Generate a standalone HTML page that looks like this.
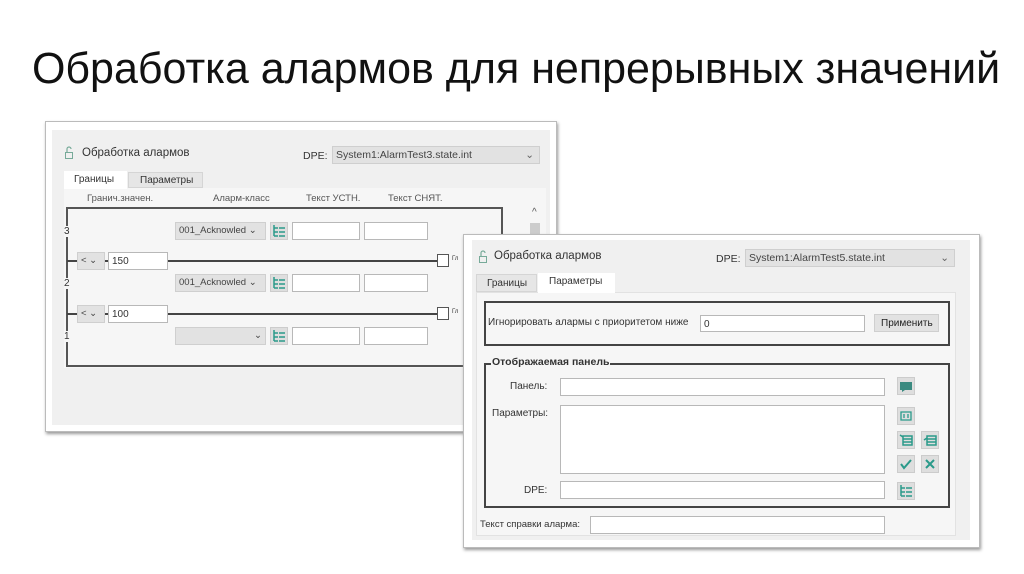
<!DOCTYPE html>
<html><head><meta charset="utf-8"><style>
*{box-sizing:border-box;margin:0;padding:0}
body{width:1024px;height:574px;background:#fff;position:relative;overflow:hidden;font-family:"Liberation Sans",sans-serif;color:#222}
.a{position:absolute}
.t{font-size:10px;color:#333;white-space:nowrap}
.in{position:absolute;background:#fff;border:1px solid #b8b8b8}
.cb{position:absolute;background:#e2e2e2;border:1px solid #cfcfcf;font-size:9.5px;color:#444;padding:2px 3px;white-space:nowrap}
.ic{position:absolute;width:18px;height:18px;background:#dedede;border:1px solid #ccc}
.ic svg{width:16px;height:16px}
.line{position:absolute;background:#444;height:2px}
</style></head><body>
<div class="a" style="left:32px;top:44px;font-size:44px;color:#111;white-space:nowrap;transform:scaleX(0.977);transform-origin:left top">Обработка алармов для непрерывных значений</div>

<!-- panel 1 -->
<div class="a" style="left:45px;top:121px;width:512px;height:311px;border:1px solid #bbb;background:#fff;box-shadow:1px 2px 3px #999"></div>
<div class="a" style="left:52px;top:130px;width:498px;height:295px;background:#f0f0f0"></div>
<svg class="a" style="left:64px;top:146px" width="10" height="14"><path d="M3 6V3a2 2 0 0 1 4 0" fill="none" stroke="#7a9" stroke-width="1.2"/><rect x="1.5" y="6.5" width="7" height="6" fill="none" stroke="#7a9"/></svg>
<div class="a t" style="left:82px;top:147px;font-size:11.5px">Обработка алармов</div>
<div class="a t" style="left:303px;top:150px;font-size:10.5px">DPE:</div>
<div class="cb" style="left:332px;top:146px;width:208px;height:18px;font-size:10.5px">System1:AlarmTest3.state.int<span style="position:absolute;right:5px;color:#666">⌄</span></div>
<div class="a" style="left:64px;top:188px;width:482px;height:180px;background:#f6f6f6"></div>
<div class="a t" style="left:64px;top:171px;width:63px;height:18px;background:#fff;padding:3px 0 0 10px">Границы</div>
<div class="a t" style="left:128px;top:172px;width:75px;height:16px;background:#e6e6e6;border:1px solid #d5d5d5;padding:2px 0 0 11px">Параметры</div>
<div class="a t" style="left:87px;top:193px;font-size:9.5px;color:#555">Гранич.значен.</div>
<div class="a t" style="left:213px;top:193px;font-size:9.5px;color:#555">Аларм-класс</div>
<div class="a t" style="left:306px;top:193px;font-size:9.5px;color:#555">Текст УСТН.</div>
<div class="a t" style="left:388px;top:193px;font-size:9.5px;color:#555">Текст СНЯТ.</div>
<div class="a" style="left:66px;top:207px;width:437px;height:160px;border:2px solid #555;border-right:none"></div>
<div class="a" style="left:501px;top:207px;width:2px;height:30px;background:#555"></div>
<div class="a t" style="left:532px;top:207px;color:#555">^</div>
<div class="a" style="left:530px;top:223px;width:10px;height:14px;background:#ccc"></div>
<!-- rows -->
<div class="a t" style="left:64px;top:226px;background:#f6f6f6">3</div>
<div class="a t" style="left:64px;top:278px;background:#f6f6f6">2</div>
<div class="a t" style="left:64px;top:331px;background:#f6f6f6">1</div>
<div class="cb" style="left:175px;top:222px;width:91px;height:18px">001_Acknowled ⌄</div>
<div class="cb" style="left:175px;top:274px;width:91px;height:18px">001_Acknowled ⌄</div>
<div class="cb" style="left:175px;top:327px;width:91px;height:18px;text-align:right">⌄</div>
<div class="ic" style="left:270px;top:222px"><svg viewBox="0 0 16 16"><path d="M3 2v11M3 5h4M3 9h4M3 13h4M8 5h6M8 9h6M8 13h6" stroke="#2a9a8a" stroke-width="1.5" fill="none"/></svg></div>
<div class="ic" style="left:270px;top:274px"><svg viewBox="0 0 16 16"><path d="M3 2v11M3 5h4M3 9h4M3 13h4M8 5h6M8 9h6M8 13h6" stroke="#2a9a8a" stroke-width="1.5" fill="none"/></svg></div>
<div class="ic" style="left:270px;top:327px"><svg viewBox="0 0 16 16"><path d="M3 2v11M3 5h4M3 9h4M3 13h4M8 5h6M8 9h6M8 13h6" stroke="#2a9a8a" stroke-width="1.5" fill="none"/></svg></div>
<div class="in" style="left:292px;top:222px;width:68px;height:18px"></div>
<div class="in" style="left:364px;top:222px;width:64px;height:18px"></div>
<div class="in" style="left:292px;top:274px;width:68px;height:18px"></div>
<div class="in" style="left:364px;top:274px;width:64px;height:18px"></div>
<div class="in" style="left:292px;top:327px;width:68px;height:18px"></div>
<div class="in" style="left:364px;top:327px;width:64px;height:18px"></div>
<div class="line" style="left:67px;top:260px;width:372px"></div>
<div class="line" style="left:67px;top:313px;width:372px"></div>
<div class="cb" style="left:77px;top:252px;width:28px;height:18px">&lt; ⌄</div>
<div class="cb" style="left:77px;top:305px;width:28px;height:18px">&lt; ⌄</div>
<div class="in t" style="left:108px;top:252px;width:60px;height:18px;padding:3px 3px">150</div>
<div class="in t" style="left:108px;top:305px;width:60px;height:18px;padding:3px 3px">100</div>
<div class="in" style="left:437px;top:254px;width:12px;height:13px;border-color:#555"></div>
<div class="in" style="left:437px;top:307px;width:12px;height:13px;border-color:#555"></div>
<div class="a t" style="left:452px;top:256px;font-size:6px">Гл</div>
<div class="a t" style="left:452px;top:309px;font-size:6px">Гл</div>

<!-- panel 2 -->
<div class="a" style="left:463px;top:234px;width:517px;height:314px;border:1px solid #bbb;background:#fff;box-shadow:1px 2px 3px #999"></div>
<div class="a" style="left:472px;top:240px;width:498px;height:300px;background:#f0f0f0"></div>
<svg class="a" style="left:478px;top:250px" width="10" height="14"><path d="M3 6V3a2 2 0 0 1 4 0" fill="none" stroke="#7a9" stroke-width="1.2"/><rect x="1.5" y="6.5" width="7" height="6" fill="none" stroke="#7a9"/></svg>
<div class="a t" style="left:494px;top:250px;font-size:11.5px">Обработка алармов</div>
<div class="a t" style="left:716px;top:253px;font-size:10.5px">DPE:</div>
<div class="cb" style="left:745px;top:249px;width:210px;height:18px;font-size:10.5px">System1:AlarmTest5.state.int<span style="position:absolute;right:5px;color:#666">⌄</span></div>
<div class="a" style="left:476px;top:292px;width:480px;height:244px;background:#f6f6f6;border:1px solid #e2e2e2"></div>
<div class="a t" style="left:476px;top:274px;width:61px;height:18px;background:#e6e6e6;border:1px solid #d5d5d5;padding:3px 0 0 10px">Границы</div>
<div class="a t" style="left:538px;top:273px;width:77px;height:20px;background:#fff;padding:3px 0 0 11px">Параметры</div>
<div class="a" style="left:484px;top:301px;width:466px;height:45px;border:2px solid #444"></div>
<div class="a t" style="left:488px;top:317px;font-size:10px">Игнорировать алармы с приоритетом ниже</div>
<div class="in t" style="left:700px;top:315px;width:165px;height:17px;padding:3px 3px">0</div>
<div class="cb" style="left:874px;top:314px;width:65px;height:18px;font-size:10px;color:#222;padding:3px 6px">Применить</div>
<div class="a" style="left:484px;top:363px;width:466px;height:145px;border:2px solid #444"></div>
<div class="a t" style="left:491px;top:356px;background:#f6f6f6;font-weight:bold;font-size:10.5px;padding:0 1px">Отображаемая панель</div>
<div class="a t" style="left:510px;top:381px">Панель:</div>
<div class="a t" style="left:492px;top:408px">Параметры:</div>
<div class="a t" style="left:524px;top:485px">DPE:</div>
<div class="in" style="left:560px;top:378px;width:325px;height:18px"></div>
<div class="in" style="left:560px;top:405px;width:325px;height:69px"></div>
<div class="in" style="left:560px;top:481px;width:325px;height:18px"></div>
<div class="a t" style="left:480px;top:519px;font-size:9.5px">Текст справки аларма:</div>
<div class="in" style="left:590px;top:516px;width:295px;height:18px"></div>
<div class="ic" style="left:897px;top:377px"><svg viewBox="0 0 16 16"><path d="M2 4h12v8H7l-3 2v-2H2z" fill="#3a8a80"/></svg></div>
<div class="ic" style="left:897px;top:407px"><svg viewBox="0 0 16 16"><path d="M3 4h10v8H3z M6 6v4M10 6v4" stroke="#2a9a8a" stroke-width="1.3" fill="none"/></svg></div>
<div class="ic" style="left:897px;top:431px"><svg viewBox="0 0 16 16"><path d="M5 4h9v9H5zM5 7h9M5 10h9M2 3l3 2" stroke="#2a9a8a" stroke-width="1.5" fill="none"/></svg></div>
<div class="ic" style="left:921px;top:431px"><svg viewBox="0 0 16 16"><path d="M5 4h9v9H5zM5 7h9M5 10h9M2 8l3-2" stroke="#2a9a8a" stroke-width="1.5" fill="none"/></svg></div>
<div class="ic" style="left:897px;top:455px"><svg viewBox="0 0 16 16"><path d="M3 8l3 4 7-8" stroke="#2a9a8a" stroke-width="2" fill="none"/></svg></div>
<div class="ic" style="left:921px;top:455px"><svg viewBox="0 0 16 16"><path d="M4 4l8 8M12 4l-8 8" stroke="#2a9a8a" stroke-width="2" fill="none"/></svg></div>
<div class="ic" style="left:897px;top:482px"><svg viewBox="0 0 16 16"><path d="M3 2v11M3 5h4M3 9h4M3 13h4M8 5h6M8 9h6M8 13h6" stroke="#2a9a8a" stroke-width="1.5" fill="none"/></svg></div>
</body></html>
